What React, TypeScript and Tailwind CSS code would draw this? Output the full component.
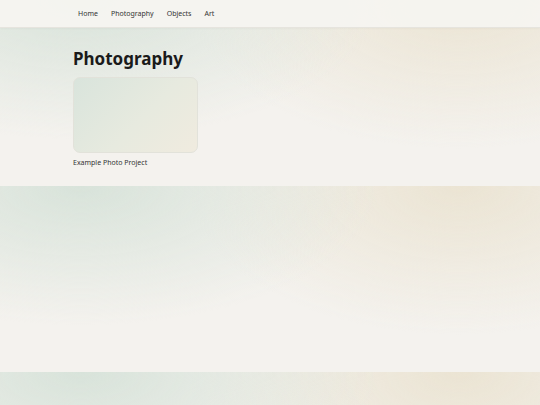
export default function App() {
  const links = ['Home', 'Photography', 'Objects', 'Art']

  return (
    <div
      className="min-h-screen bg-[#f4f2ee] bg-[radial-gradient(ellipse_55%_75%_at_15%_0%,#d8e3da,transparent),radial-gradient(ellipse_50%_80%_at_85%_0%,#ebe4d3,transparent)] bg-[length:100%_186px] bg-repeat text-[#222]"
      style={{ fontFamily: '"Noto Sans", "Open Sans", sans-serif' }}
    >
      {/* Nav */}
      <header className="h-[28px] bg-[#f5f4f0]/95 border-b border-[#e6e4de] shadow-[0_1px_2px_rgba(0,0,0,0.03)]">
        <nav className="flex items-center h-full pl-[78px] gap-[13px] text-[7px] text-[#333]">
          {links.map((l) => (
            <span key={l} className="leading-none cursor-pointer">
              {l}
            </span>
          ))}
        </nav>
      </header>

      {/* Content */}
      <main className="pl-[73px] pt-[22px]">
        <h1 className="text-[17px] font-bold leading-none text-[#1a1a1a] mb-[10px]">Photography</h1>
        <div className="w-[125px]">
          <div className="h-[76px] rounded-[7px] border border-[#e2e2da] bg-[linear-gradient(135deg,#d9e4dc,#e7eadf_55%,#f0ebdf)]" />
          <p className="mt-[5px] text-[7px] text-[#333]">Example Photo Project</p>
        </div>
      </main>
    </div>
  )
}
